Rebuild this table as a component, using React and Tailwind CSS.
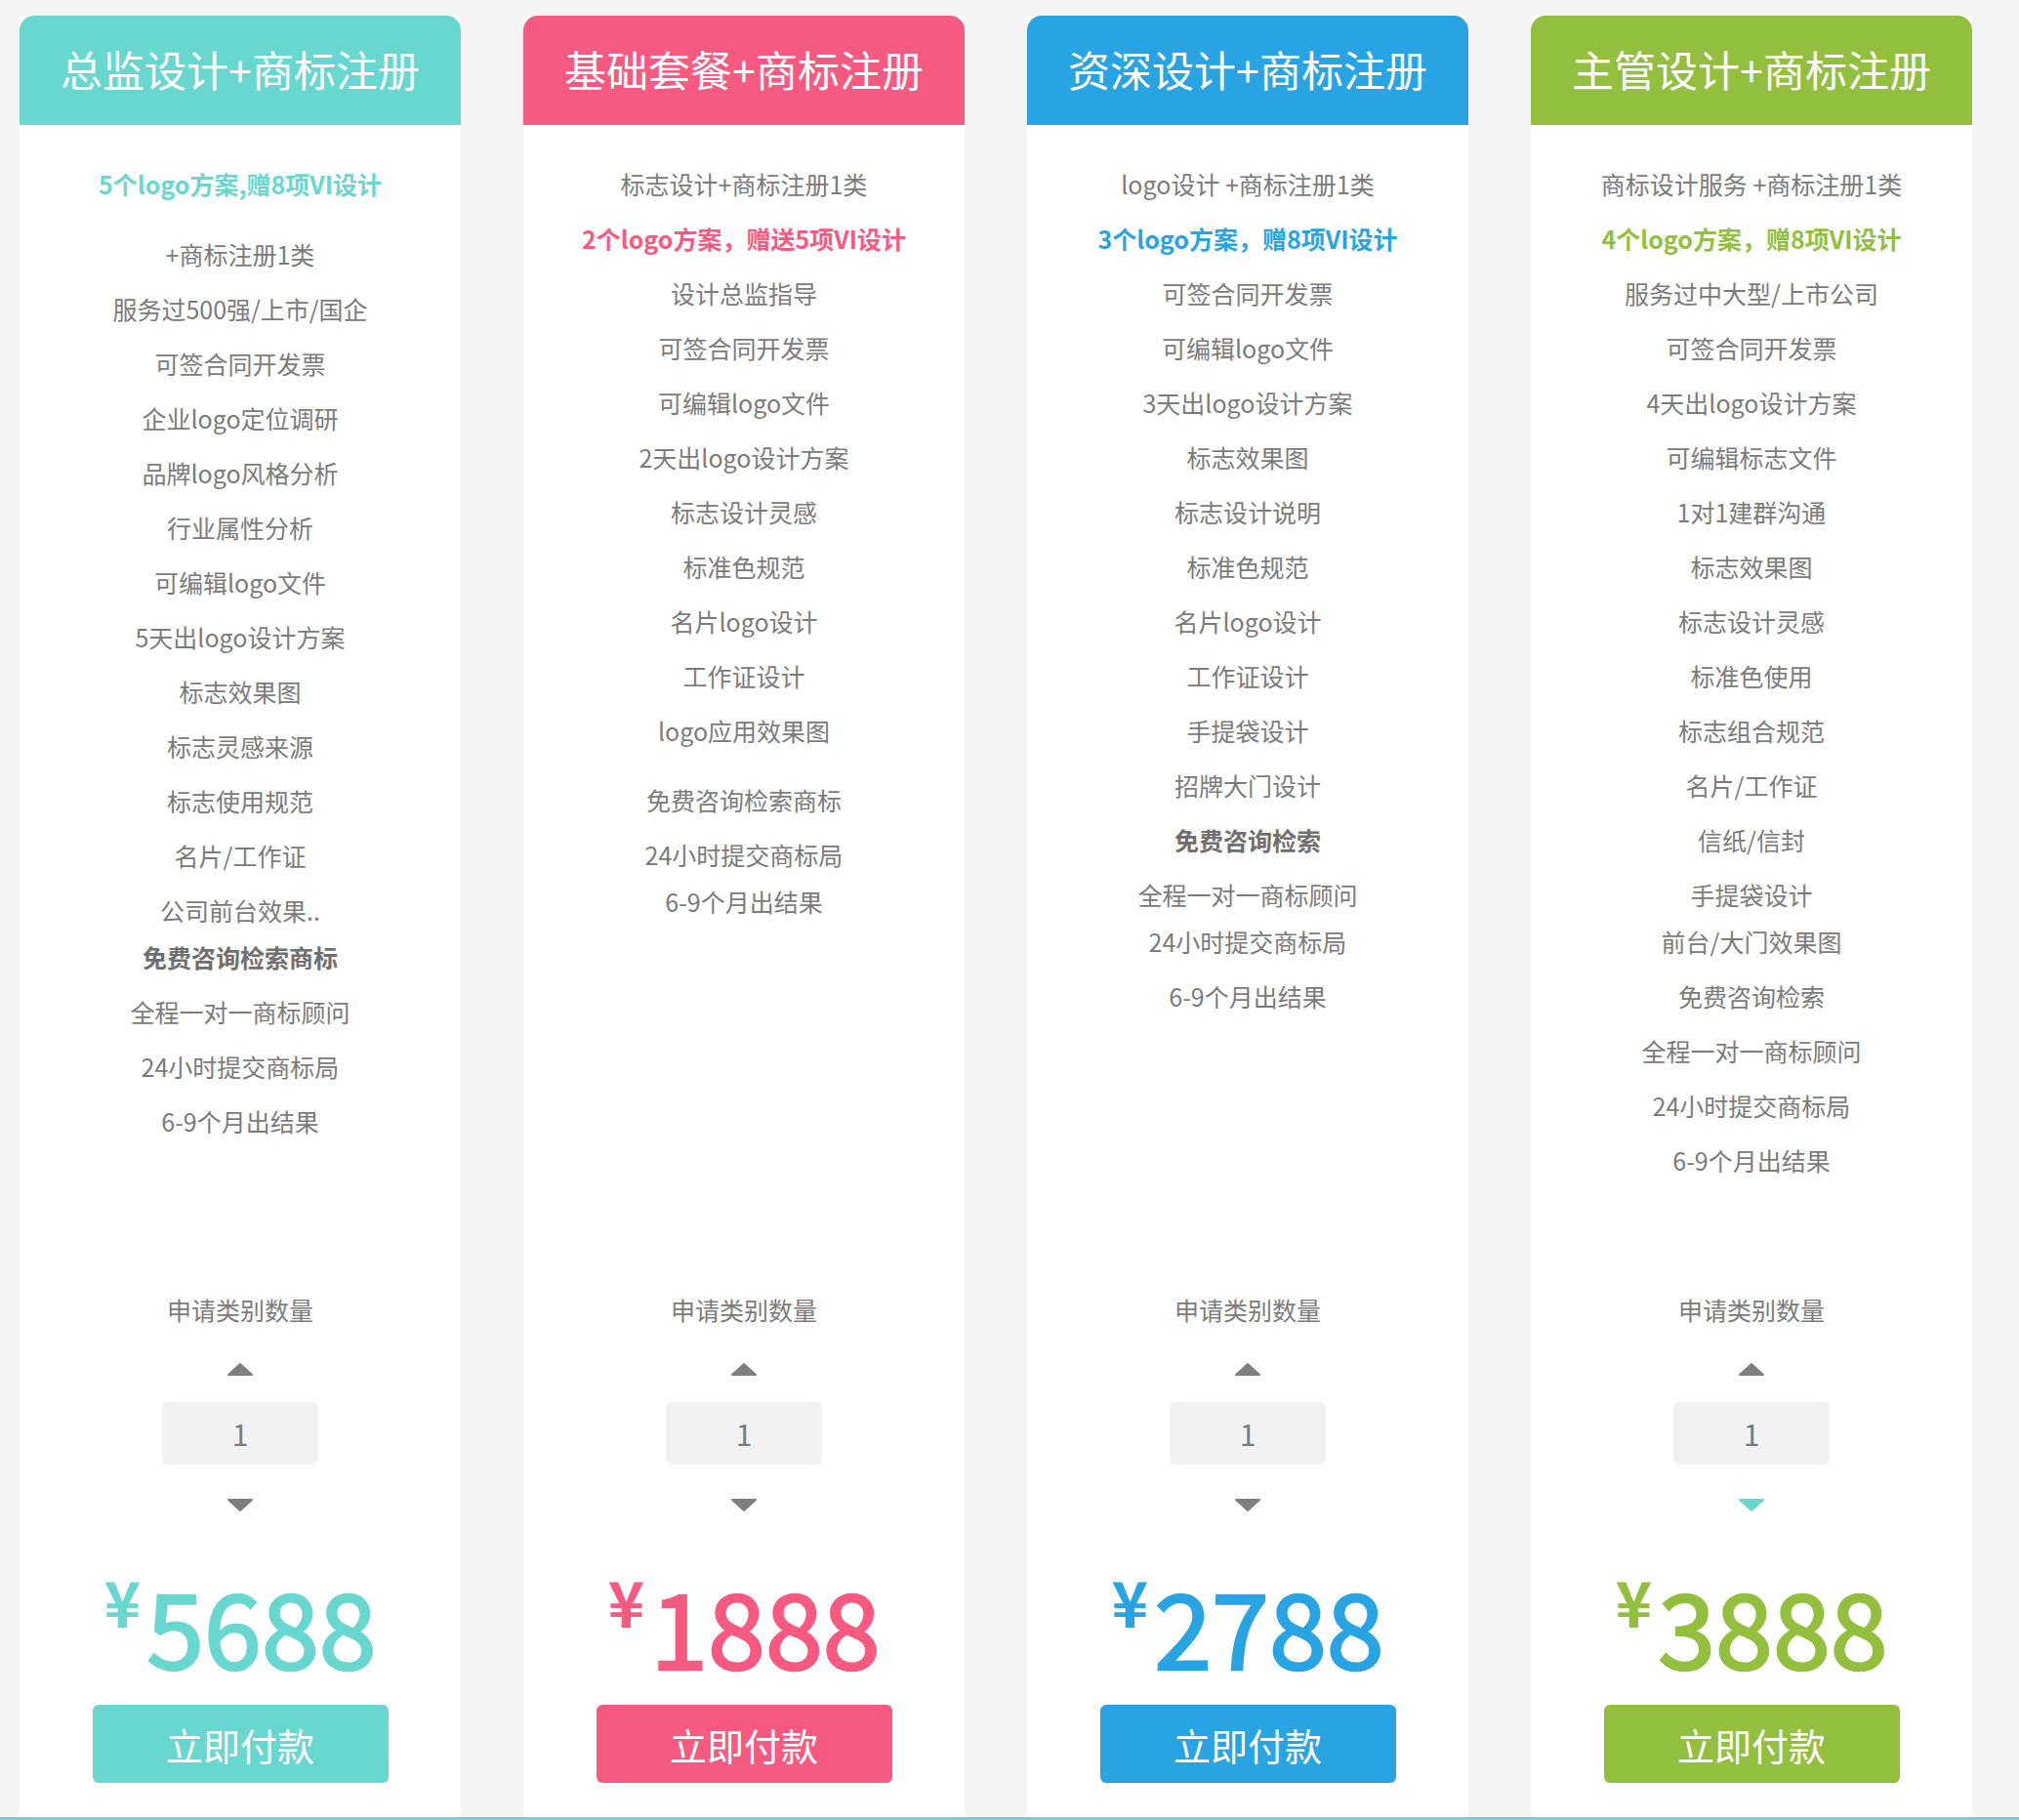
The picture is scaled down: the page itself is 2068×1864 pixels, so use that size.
const plans = [
  {
    title: "总监设计+商标注册",
    color: "text-[#68d7d0]",
    bg: "bg-[#68d7d0]",
    price: "5688",
    downArrow: "#7f7f7f",
    items: [
      { t: "5个logo方案,赠8项VI设计", accent: true },
      { t: "+商标注册1类", gap: "mt-[16px]" },
      { t: "服务过500强/上市/国企" },
      { t: "可签合同开发票" },
      { t: "企业logo定位调研" },
      { t: "品牌logo风格分析" },
      { t: "行业属性分析" },
      { t: "可编辑logo文件" },
      { t: "5天出logo设计方案" },
      { t: "标志效果图" },
      { t: "标志灵感来源" },
      { t: "标志使用规范" },
      { t: "名片/工作证" },
      { t: "公司前台效果.." },
      { t: "免费咨询检索商标", bold: true, gap: "-mt-[8px]" },
      { t: "全程一对一商标顾问" },
      { t: "24小时提交商标局" },
      { t: "6-9个月出结果" },
    ],
  },
  {
    title: "基础套餐+商标注册",
    color: "text-[#f75a80]",
    bg: "bg-[#f75a80]",
    price: "1888",
    downArrow: "#7f7f7f",
    items: [
      { t: "标志设计+商标注册1类" },
      { t: "2个logo方案，赠送5项VI设计", accent: true },
      { t: "设计总监指导" },
      { t: "可签合同开发票" },
      { t: "可编辑logo文件" },
      { t: "2天出logo设计方案" },
      { t: "标志设计灵感" },
      { t: "标准色规范" },
      { t: "名片logo设计" },
      { t: "工作证设计" },
      { t: "logo应用效果图" },
      { t: "免费咨询检索商标", gap: "mt-[15px]" },
      { t: "24小时提交商标局" },
      { t: "6-9个月出结果", gap: "-mt-[8px]" },
    ],
  },
  {
    title: "资深设计+商标注册",
    color: "text-[#29a4e2]",
    bg: "bg-[#29a4e2]",
    price: "2788",
    downArrow: "#7f7f7f",
    items: [
      { t: "logo设计 +商标注册1类" },
      { t: "3个logo方案，赠8项VI设计", accent: true },
      { t: "可签合同开发票" },
      { t: "可编辑logo文件" },
      { t: "3天出logo设计方案" },
      { t: "标志效果图" },
      { t: "标志设计说明" },
      { t: "标准色规范" },
      { t: "名片logo设计" },
      { t: "工作证设计" },
      { t: "手提袋设计" },
      { t: "招牌大门设计" },
      { t: "免费咨询检索", bold: true },
      { t: "全程一对一商标顾问" },
      { t: "24小时提交商标局", gap: "-mt-[8px]" },
      { t: "6-9个月出结果" },
    ],
  },
  {
    title: "主管设计+商标注册",
    color: "text-[#92c03e]",
    bg: "bg-[#92c03e]",
    price: "3888",
    downArrow: "#68d7d0",
    items: [
      { t: "商标设计服务 +商标注册1类" },
      { t: "4个logo方案，赠8项VI设计", accent: true },
      { t: "服务过中大型/上市公司" },
      { t: "可签合同开发票" },
      { t: "4天出logo设计方案" },
      { t: "可编辑标志文件" },
      { t: "1对1建群沟通" },
      { t: "标志效果图" },
      { t: "标志设计灵感" },
      { t: "标准色使用" },
      { t: "标志组合规范" },
      { t: "名片/工作证" },
      { t: "信纸/信封" },
      { t: "手提袋设计" },
      { t: "前台/大门效果图", gap: "-mt-[8px]" },
      { t: "免费咨询检索" },
      { t: "全程一对一商标顾问" },
      { t: "24小时提交商标局" },
      { t: "6-9个月出结果" },
    ],
  },
];

function Arrow({ up, color }) {
  return (
    <svg width="28" height="15" viewBox="0 0 28 15">
      {up ? (
        <polygon points="14,2 26,13 2,13" fill={color} stroke={color} strokeWidth="2" strokeLinejoin="round" />
      ) : (
        <polygon points="2,2 26,2 14,13" fill={color} stroke={color} strokeWidth="2" strokeLinejoin="round" />
      )}
    </svg>
  );
}

function PlanCard({ plan }) {
  return (
    <div className="w-[452px] h-[1845px] bg-white flex flex-col shrink-0">
      <div className={`h-[112px] rounded-t-[15px] ${plan.bg} flex items-center justify-center text-white text-[43px] pb-[3px]`}>
        {plan.title}
      </div>

      <ul className="flex-1 pt-[32px] flex flex-col items-center">
        {plan.items.map((item, i) => (
          <li
            key={i}
            className={`h-[56px] leading-[56px] text-[25px] whitespace-nowrap ${item.gap || ""} ${
              item.accent ? `${plan.color} font-bold` : item.bold ? "text-[#6f6f6f] font-bold" : "text-[#7b7b7b]"
            }`}
          >
            {item.t}
          </li>
        ))}
      </ul>

      <div className="flex flex-col items-center pb-[35px]">
        <div className="h-[56px] leading-[56px] text-[25px] text-[#7b7b7b]">申请类别数量</div>
        <div className="mt-[26px] h-[15px]">
          <Arrow up color="#7f7f7f" />
        </div>
        <div className="mt-[26px] w-[160px] h-[64px] rounded-[6px] bg-[#f2f2f2] flex items-center justify-center text-[30px] text-[#7b7b7b]">
          1
        </div>
        <div className="mt-[34px] h-[15px]">
          <Arrow color={plan.downArrow} />
        </div>
        <div className={`h-[197px] pt-[62px] flex items-start justify-center ${plan.color}`}>
          <span className="text-[64px] leading-none font-bold mt-[-4px] mr-[6px]">¥</span>
          <span className="text-[106px] leading-none [-webkit-text-stroke:2.5px_currentColor]">{plan.price}</span>
        </div>
        <button className={`w-[303px] h-[80px] rounded-[6px] ${plan.bg} text-white text-[38px] flex items-center justify-center`}>
          立即付款
        </button>
      </div>
    </div>
  );
}

export default function App() {
  return (
    <div className="w-full min-h-screen bg-[#f4f4f4] font-['Microsoft_YaHei','Noto_Sans_CJK_SC',sans-serif]">
      <div className="flex gap-[64px] pl-[20px] pt-[16px]">
        {plans.map((p) => (
          <PlanCard key={p.price} plan={p} />
        ))}
      </div>
      <div className="h-[3px] bg-[#68d7d0]" />
    </div>
  );
}
